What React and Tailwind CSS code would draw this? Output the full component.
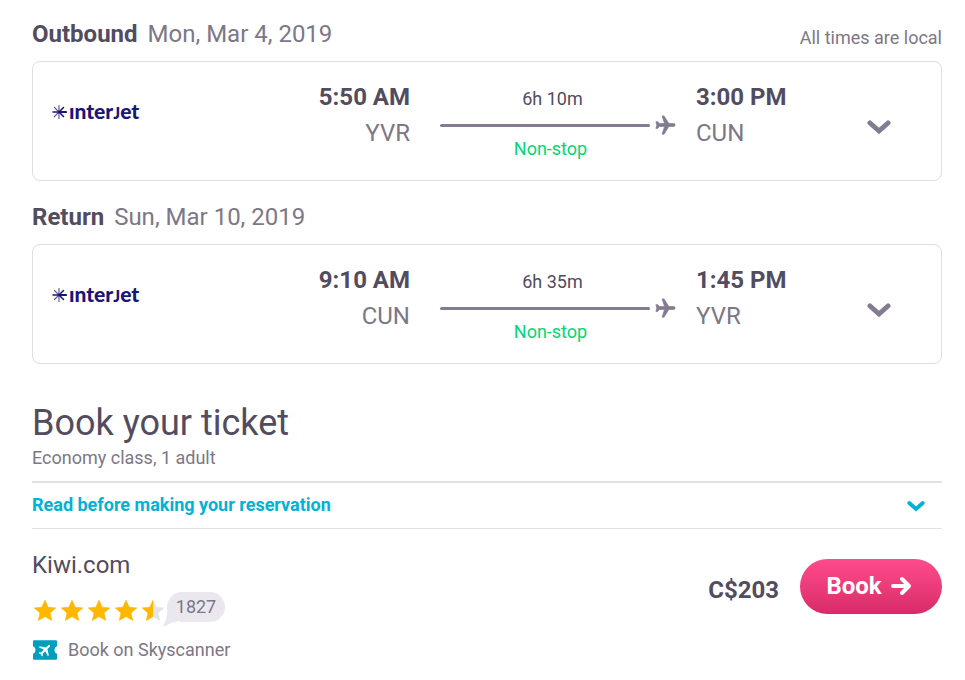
import { useState } from "react";

const FLIGHTS = [
  {
    label: "Outbound",
    date: "Mon, Mar 4, 2019",
    depart: "5:50 AM",
    from: "YVR",
    duration: "6h 10m",
    arrive: "3:00 PM",
    to: "CUN",
    note: "All times are local",
  },
  {
    label: "Return",
    date: "Sun, Mar 10, 2019",
    depart: "9:10 AM",
    from: "CUN",
    duration: "6h 35m",
    arrive: "1:45 PM",
    to: "YVR",
  },
];

const STAR_PATH = "M12 2.2l2.9 6.3 6.9.7-5.2 4.6 1.5 6.8-6.1-3.5-6.1 3.5 1.5-6.8-5.2-4.6 6.9-.7z";
const PLANE_PATH = "M21 15.500v-2l-8-5V3.500a1.500 1.500 0 0 0-3 0v5l-8 5v2l8-2.500V18.500l-2 1.500V22l3.500-1 3.500 1v-2L13 18.500V13z";

function AirlineLogo() {
  return (
    <div className="flex items-center gap-0.5 text-[#1c1478]">
      <svg viewBox="0 0 16 16" className="w-4 h-4" fill="none" stroke="currentColor" strokeLinecap="round">
        <path d="M8 8H15" strokeWidth="2.200" />
        <path d="M8 8L12.500 3.500M8 8L12.500 12.500M8 8H2" strokeWidth="1.500" />
        <path d="M8 8V1.500M8 8V14.500M8 8L3.500 3.500M8 8L3.500 12.500" strokeWidth="1.200" opacity="0.7" />
      </svg>
      <span className="font-['Lato'] font-black text-[21px] leading-6">
        ınter<span className="text-[16px]">J</span>et
      </span>
    </div>
  );
}

function Chevron({ className, open }) {
  return (
    <svg
      viewBox="0 0 24 16"
      className={`${className} ${open ? "rotate-180" : ""}`}
      fill="none"
      stroke="currentColor"
      strokeWidth="5"
      strokeLinecap="round"
    >
      <path d="M3 4l9 8 9-8" />
    </svg>
  );
}

function FlightCard({ flight }) {
  const [open, setOpen] = useState(false);

  return (
    <section className="mb-5">
      <div className="flex items-center justify-between h-8 mb-[11px]">
        <h2 className="text-2xl leading-8 text-[#7c7789]">
          <strong className="font-bold text-[#524c61] mr-[10px]">{flight.label}</strong>
          {flight.date}
        </h2>
        {flight.note && <span className="text-lg leading-6 pt-2">{flight.note}</span>}
      </div>

      <div className="flex items-start rounded-lg border border-[#dfdde5] h-[120px] pl-[18px] pr-[50px] pt-[17px]">
        <div className="pt-5">
          <AirlineLogo />
        </div>
        <div className="flex-1 text-right text-2xl leading-9">
          <div className="font-bold text-[#524c61]">{flight.depart}</div>
          <div>{flight.from}</div>
        </div>
        <div className="w-[236px] ml-[30px] mr-5">
          <div className="w-[225px] text-center text-lg leading-6 text-[#524c61] pt-2 pb-0.5">{flight.duration}</div>
          <div className="flex items-center justify-between h-6">
            <span className="w-[210px] h-[3px] rounded-sm bg-[#827b91]" />
            <svg
              viewBox="1 1 22 22"
              className="w-[22px] h-6 rotate-90"
              fill="#827b91"
              stroke="#827b91"
              strokeWidth="0.7"
              strokeLinejoin="round"
            >
              <path d={PLANE_PATH} transform="translate(1 0) scale(0.96)" />
            </svg>
          </div>
          <div className="w-[221px] text-center text-lg leading-6 text-[#00d775]">Non-stop</div>
        </div>
        <div className="w-[171px] text-2xl leading-9">
          <div className="font-bold text-[#524c61]">{flight.arrive}</div>
          <div>{flight.to}</div>
        </div>
        <button
          type="button"
          aria-label="Show flight details"
          aria-expanded={open}
          onClick={() => setOpen(!open)}
          className="pt-10 text-[#827b91]"
        >
          <Chevron open={open} className="w-6 h-4" />
        </button>
      </div>
    </section>
  );
}

function Rating() {
  return (
    <div className="flex items-center h-10 pl-px">
      <div className="flex gap-[3px] pt-2" role="img" aria-label="4.5 out of 5 stars">
        {[1, 2, 3, 4].map((n) => (
          <svg key={n} viewBox="1 1 22 22" className="w-6 h-6" fill="#ffb700" stroke="#ffb700" strokeWidth="0.6" strokeLinejoin="round">
            <path d={STAR_PATH} />
          </svg>
        ))}
        <svg viewBox="1 1 22 22" className="w-6 h-6" strokeWidth="0.6" strokeLinejoin="round">
          <defs>
            <linearGradient id="half">
              <stop offset="50%" stopColor="#ffb700" />
              <stop offset="50%" stopColor="#e4e2e9" />
            </linearGradient>
          </defs>
          <path d={STAR_PATH} fill="url(#half)" stroke="url(#half)" />
        </svg>
      </div>
      <span className="relative ml-0.5 rounded-full bg-[#eae8ee] w-[58px] h-[30px] text-center text-lg leading-[30px]">
        1827
        <svg viewBox="0 0 14 16" className="absolute -left-1 bottom-[-5px] -z-10 w-[14px] h-4" fill="#eae8ee">
          <path d="M4 0C4 6 3 9 1 12.500c-1.500 2.500 0 3.500 2 2.500C6 13 9 11 14 11V0z" />
        </svg>
      </span>
    </div>
  );
}

function TicketIcon() {
  return (
    <svg viewBox="1 1 22 18" className="w-6 h-5" fill="#009fbd">
      <path d="M2 1h20a1 1 0 0 1 1 1v4.500c-3 1-3 6 0 7V18a1 1 0 0 1-1 1H2a1 1 0 0 1-1-1v-4.500c3-1 3-6 0-7V2a1 1 0 0 1 1-1z" />
      <g transform="translate(12 10) rotate(45) scale(0.62) translate(-11.500 -12)" fill="#fff">
        <path d={PLANE_PATH} />
      </g>
    </svg>
  );
}

export default function App() {
  const [showInfo, setShowInfo] = useState(false);

  return (
    <main className="isolate min-h-screen bg-white font-['Roboto',sans-serif] text-[#7c7789] pl-8 pr-[23px] pt-[18px]">
      {FLIGHTS.map((flight) => (
        <FlightCard key={flight.label} flight={flight} />
      ))}

      <h1 className="pt-4 text-4xl leading-[46px] text-[#524c61]">Book your ticket</h1>
      <p className="text-lg leading-6">Economy class, 1 adult</p>

      <button
        type="button"
        aria-expanded={showInfo}
        onClick={() => setShowInfo(!showInfo)}
        className="mt-[11px] flex w-full h-12 items-center justify-between border-t-2 border-b border-[#e2e0e8] pr-[17px] text-lg font-bold text-[#00b2d6]"
      >
        <span className="pb-0.5">Read before making your reservation</span>
        <Chevron open={showInfo} className="w-[18px] h-3" />
      </button>

      <div className="flex justify-between pt-[18px]">
        <div>
          <h3 className="text-2xl leading-9 pb-1 text-[#524c61]">Kiwi.com</h3>
          <Rating />
          <div className="flex items-center gap-[11px] mt-[11px] pl-px text-lg leading-6">
            <TicketIcon />
            Book on Skyscanner
          </div>
        </div>
        <div className="flex items-center gap-[21px] h-[55px] mt-3">
          <span className="text-2xl font-bold text-[#524c61] pt-1.5">C$203</span>
          <button
            type="button"
            className="flex items-center justify-center gap-2 w-[142px] h-[55px] rounded-full bg-linear-to-b from-[#ff4b8b] to-[#d92b69] text-2xl font-bold text-white pr-1 pb-0.5"
          >
            Book
            <svg viewBox="0 0 22 20" className="w-[22px] h-5" fill="none" stroke="currentColor" strokeWidth="4" strokeLinecap="round" strokeLinejoin="round">
              <path d="M3 10h15M12 3l7 7-7 7" />
            </svg>
          </button>
        </div>
      </div>
    </main>
  );
}
